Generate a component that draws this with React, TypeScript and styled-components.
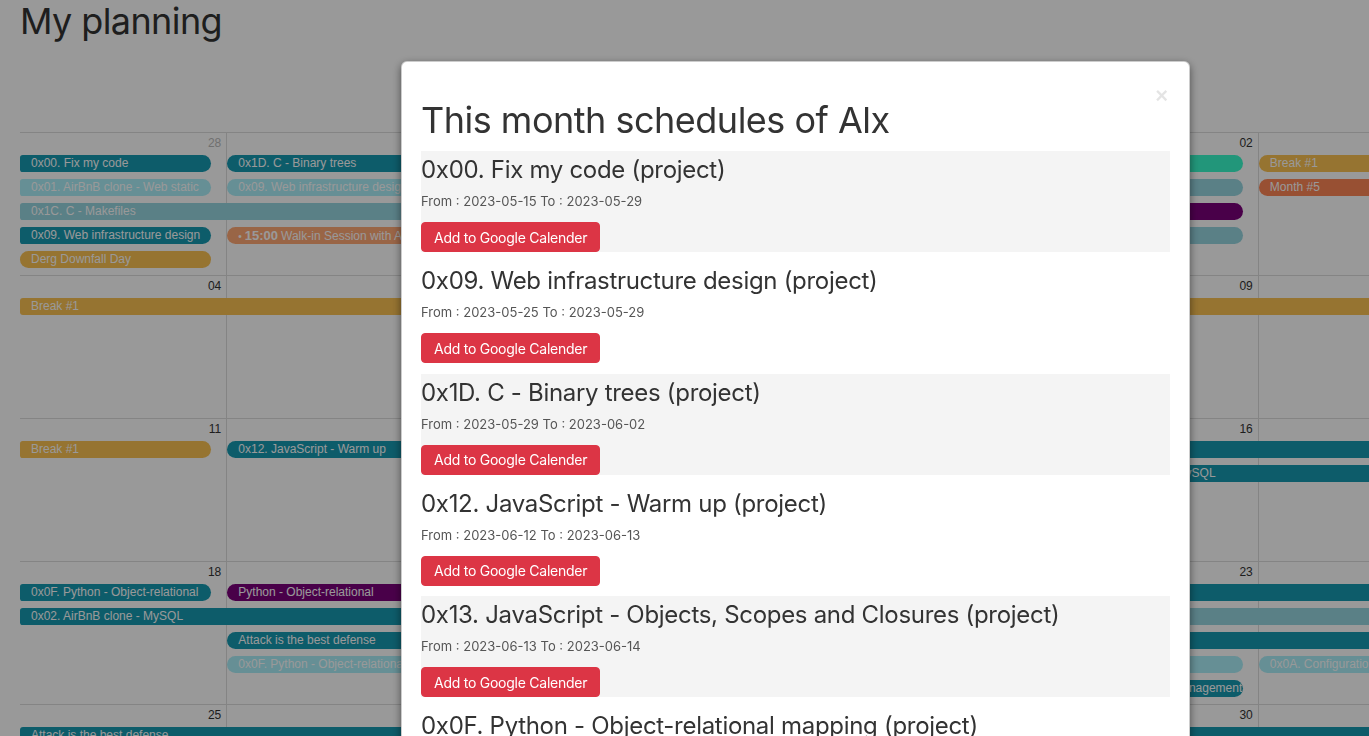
import React from "react";
import styled, { createGlobalStyle, css } from "styled-components";

const GlobalStyle = createGlobalStyle`
  html, body {
    margin: 0;
    padding: 0;
    background: #ffffff;
    overflow: hidden;
  }
  body {
    font-family: "Liberation Sans", Arial, sans-serif;
  }
  * { box-sizing: border-box; }
`;

const COL = 206.3;

const palette = {
  teal: "#1799b1",
  faded: "#aaeef8",
  slate: "#96d5e0",
  gold: "#fac152",
  walkin: "#ffa876",
  month: "#fd8555",
  purple: "#7b007b",
  green: "#39facb",
};

type Tone = keyof typeof palette;

type Ev = {
  slot: number;
  from: number;
  to: number;
  label: string;
  time?: string;
  tone: Tone;
  cs?: boolean;
  ce?: boolean;
};

type Week = { days: string[]; muted: boolean[]; events: Ev[] };

const weeks: Week[] = [
  {
    days: ["28", "29", "30", "31", "01", "02", "03"],
    muted: [true, true, true, true, false, false, false],
    events: [
      { slot: 0, from: 1, to: 1, label: "0x00. Fix my code", tone: "teal", cs: true },
      { slot: 0, from: 2, to: 5, label: "0x1D. C - Binary trees", tone: "teal" },
      { slot: 0, from: 6, to: 6, label: "Hackathon", tone: "green" },
      { slot: 0, from: 7, to: 7, label: "Break #1", tone: "gold", ce: true },
      { slot: 1, from: 1, to: 1, label: "0x01. AirBnB clone - Web static", tone: "faded", cs: true },
      { slot: 1, from: 2, to: 5, label: "0x09. Web infrastructure design", tone: "faded" },
      { slot: 1, from: 6, to: 6, label: "0x03. Shell", tone: "slate" },
      { slot: 1, from: 7, to: 7, label: "Month #5", tone: "month" },
      { slot: 2, from: 1, to: 4, label: "0x1C. C - Makefiles", tone: "slate", cs: true },
      { slot: 2, from: 5, to: 6, label: "Peer learning day", tone: "purple" },
      { slot: 3, from: 1, to: 1, label: "0x09. Web infrastructure design", tone: "teal", cs: true },
      { slot: 3, from: 2, to: 2, label: "Walk-in Session with Alx mentors", time: "15:00", tone: "walkin" },
      { slot: 3, from: 3, to: 6, label: "0x1B. C - Sorting algorithms", tone: "slate" },
      { slot: 4, from: 1, to: 1, label: "Derg Downfall Day", tone: "gold" },
    ],
  },
  {
    days: ["04", "05", "06", "07", "08", "09", "10"],
    muted: [false, false, false, false, false, false, false],
    events: [{ slot: 0, from: 1, to: 7, label: "Break #1", tone: "gold", cs: true, ce: true }],
  },
  {
    days: ["11", "12", "13", "14", "15", "16", "17"],
    muted: [false, false, false, false, false, false, false],
    events: [
      { slot: 0, from: 1, to: 1, label: "Break #1", tone: "gold", cs: true },
      { slot: 0, from: 2, to: 3, label: "0x12. JavaScript - Warm up", tone: "teal" },
      { slot: 0, from: 4, to: 7, label: "0x14. JavaScript - Web scraping", tone: "teal", ce: true },
      { slot: 1, from: 3, to: 4, label: "0x13. JavaScript - Objects, Scopes and Closures", tone: "teal" },
      { slot: 1, from: 6, to: 7, label: "0x02. AirBnB clone - MySQL", tone: "teal", ce: true },
    ],
  },
  {
    days: ["18", "19", "20", "21", "22", "23", "24"],
    muted: [false, false, false, false, false, false, false],
    events: [
      { slot: 0, from: 1, to: 1, label: "0x0F. Python - Object-relational", tone: "teal", cs: true },
      { slot: 0, from: 2, to: 2, label: "Python - Object-relational", tone: "purple" },
      { slot: 0, from: 3, to: 7, label: "0x10. Python - Network #0", tone: "teal", ce: true },
      { slot: 1, from: 1, to: 2, label: "0x02. AirBnB clone - MySQL", tone: "teal", cs: true },
      { slot: 1, from: 3, to: 7, label: "0x0B. SSH", tone: "slate", ce: true },
      { slot: 2, from: 2, to: 7, label: "Attack is the best defense", tone: "teal", ce: true },
      { slot: 3, from: 2, to: 6, label: "0x0F. Python - Object-relational mapping", tone: "faded" },
      { slot: 3, from: 7, to: 7, label: "0x0A. Configuration management", tone: "faded" },
      { slot: 4, from: 6, to: 6, label: "0x0A. Configuration management", tone: "teal" },
    ],
  },
  {
    days: ["25", "26", "27", "28", "29", "30", "01"],
    muted: [false, false, false, false, false, false, true],
    events: [{ slot: 0, from: 1, to: 7, label: "Attack is the best defense", tone: "teal", cs: true, ce: true }],
  },
];

const schedules = [
  { title: "0x00. Fix my code (project)", from: "2023-05-15", to: "2023-05-29" },
  { title: "0x09. Web infrastructure design (project)", from: "2023-05-25", to: "2023-05-29" },
  { title: "0x1D. C - Binary trees (project)", from: "2023-05-29", to: "2023-06-02" },
  { title: "0x12. JavaScript - Warm up (project)", from: "2023-06-12", to: "2023-06-13" },
  { title: "0x13. JavaScript - Objects, Scopes and Closures (project)", from: "2023-06-13", to: "2023-06-14" },
  { title: "0x0F. Python - Object-relational mapping (project)", from: "2023-06-19", to: "2023-06-23" },
  { title: "0x0A. Configuration management (project)", from: "2023-06-23", to: "2023-06-26" },
];

/* ---------- page ---------- */

const Page = styled.div`
  padding: 0 20px;
  width: max-content;
`;

const PageTitle = styled.h1`
  margin: 0;
  font-family: Inter, "Liberation Sans", sans-serif;
  font-size: 36px;
  line-height: 43px;
  font-weight: 400;
  letter-spacing: -0.6px;
  color: #333333;
`;

const Calendar = styled.div`
  margin-top: 89px;
  width: ${COL * 7}px;
  display: flex;
  flex-direction: column;
`;

const WeekRow = styled.div`
  height: 143px;
  border-top: 1px solid #dddddd;
  display: grid;
  grid-template-columns: repeat(7, ${COL}px);
  grid-template-rows: 22px repeat(5, 24px) 1fr;
`;

const DayCell = styled.div<{ $col: number }>`
  grid-row: 1 / -1;
  grid-column: ${(p) => p.$col};
  border-left: ${(p) => (p.$col === 1 ? "none" : "1px solid #dddddd")};
  display: flex;
  justify-content: flex-end;
  align-items: flex-start;
  padding: 3px 5px 0 0;
`;

const DayNum = styled.span<{ $muted: boolean }>`
  font-size: 12px;
  line-height: 14px;
  color: ${(p) => (p.$muted ? "#bbbbbb" : "#333333")};
`;

const EventBar = styled.div<{
  $slot: number;
  $from: number;
  $to: number;
  $tone: Tone;
  $cs?: boolean;
  $ce?: boolean;
}>`
  grid-row: ${(p) => p.$slot + 2};
  grid-column: ${(p) => `${p.$from} / ${p.$to + 1}`};
  position: relative;
  z-index: 1;
  align-self: start;
  height: 17px;
  background: ${(p) => palette[p.$tone]};
  color: #ffffff;
  font-size: 12px;
  line-height: 17px;
  white-space: nowrap;
  overflow: hidden;
  padding-left: 11px;
  ${(p) =>
    p.$cs
      ? css`
          margin-left: 0;
          border-top-left-radius: 3px;
          border-bottom-left-radius: 3px;
        `
      : css`
          margin-left: ${p.$from === 1 ? 0 : 1}px;
          border-top-left-radius: 9px;
          border-bottom-left-radius: 9px;
        `}
  ${(p) =>
    p.$ce
      ? css`
          margin-right: 0;
          border-top-right-radius: 0;
          border-bottom-right-radius: 0;
        `
      : css`
          margin-right: 15px;
          border-top-right-radius: 9px;
          border-bottom-right-radius: 9px;
        `}
`;

const Dot = styled.span`
  font-size: 10px;
  margin-right: 3px;
`;

const Time = styled.b`
  font-weight: 700;
  font-size: 13px;
  margin-right: 3px;
`;

/* ---------- modal ---------- */

const Backdrop = styled.div`
  position: fixed;
  inset: 0;
  z-index: 10;
  background: rgba(0, 0, 0, 0.4);
`;

const Dialog = styled.div`
  position: absolute;
  top: 61px;
  left: 401px;
  width: 789px;
  background: #ffffff;
  border: 1px solid rgba(0, 0, 0, 0.2);
  border-radius: 6px;
  box-shadow: 0 3px 9px rgba(0, 0, 0, 0.5);
  padding: 37px 19px 0;
  font-family: Inter, "Liberation Sans", sans-serif;
  color: #333333;
`;

const CloseButton = styled.button`
  position: absolute;
  top: 23px;
  right: 21px;
  border: none;
  background: transparent;
  padding: 0;
  font-family: "Liberation Sans", Arial, sans-serif;
  font-size: 22px;
  line-height: 1;
  font-weight: 700;
  color: #000000;
  opacity: 0.1;
  cursor: pointer;
`;

const DialogTitle = styled.h2`
  margin: 0 0 9px;
  font-size: 36px;
  line-height: 43px;
  font-weight: 400;
  letter-spacing: -0.5px;
`;

const ScheduleItem = styled.section<{ $shaded: boolean }>`
  background: ${(p) => (p.$shaded ? "#f4f4f4" : "transparent")};
  padding-top: 4px;
  margin-bottom: 10.25px;
  display: flex;
  flex-direction: column;
  align-items: flex-start;
`;

const ItemTitle = styled.h3`
  margin: 0 0 7px;
  font-size: 24px;
  line-height: 29px;
  font-weight: 400;
  letter-spacing: -0.3px;
`;

const ItemDates = styled.p`
  margin: 0 0 10px;
  font-size: 13px;
  line-height: 21px;
  color: #555555;
`;

const CalendarButton = styled.button`
  height: 30px;
  padding: 0 12px;
  border: 1px solid #dc3545;
  border-radius: 4px;
  background: #dc3545;
  color: #ffffff;
  font-family: Inter, "Liberation Sans", sans-serif;
  font-size: 14px;
  letter-spacing: -0.25px;
  cursor: pointer;
`;

export default function App() {
  return (
    <>
      <GlobalStyle />
      <Page>
        <PageTitle>My planning</PageTitle>
        <Calendar>
          {weeks.map((w, wi) => (
            <WeekRow key={wi}>
              {w.days.map((d, di) => (
                <DayCell key={di} $col={di + 1}>
                  <DayNum $muted={w.muted[di]}>{d}</DayNum>
                </DayCell>
              ))}
              {w.events.map((e, ei) => (
                <EventBar
                  key={ei}
                  $slot={e.slot}
                  $from={e.from}
                  $to={e.to}
                  $tone={e.tone}
                  $cs={e.cs}
                  $ce={e.ce}
                >
                  {e.time && (
                    <>
                      <Dot>•</Dot>
                      <Time>{e.time}</Time>
                    </>
                  )}
                  {e.label}
                </EventBar>
              ))}
            </WeekRow>
          ))}
        </Calendar>
      </Page>
      <Backdrop>
        <Dialog role="dialog">
          <CloseButton aria-label="Close">×</CloseButton>
          <DialogTitle>This month schedules of Alx</DialogTitle>
          {schedules.map((s, i) => (
            <ScheduleItem key={i} $shaded={i % 2 === 0}>
              <ItemTitle>{s.title}</ItemTitle>
              <ItemDates>
                From : {s.from} To : {s.to}
              </ItemDates>
              <CalendarButton>Add to Google Calender</CalendarButton>
            </ScheduleItem>
          ))}
        </Dialog>
      </Backdrop>
    </>
  );
}
